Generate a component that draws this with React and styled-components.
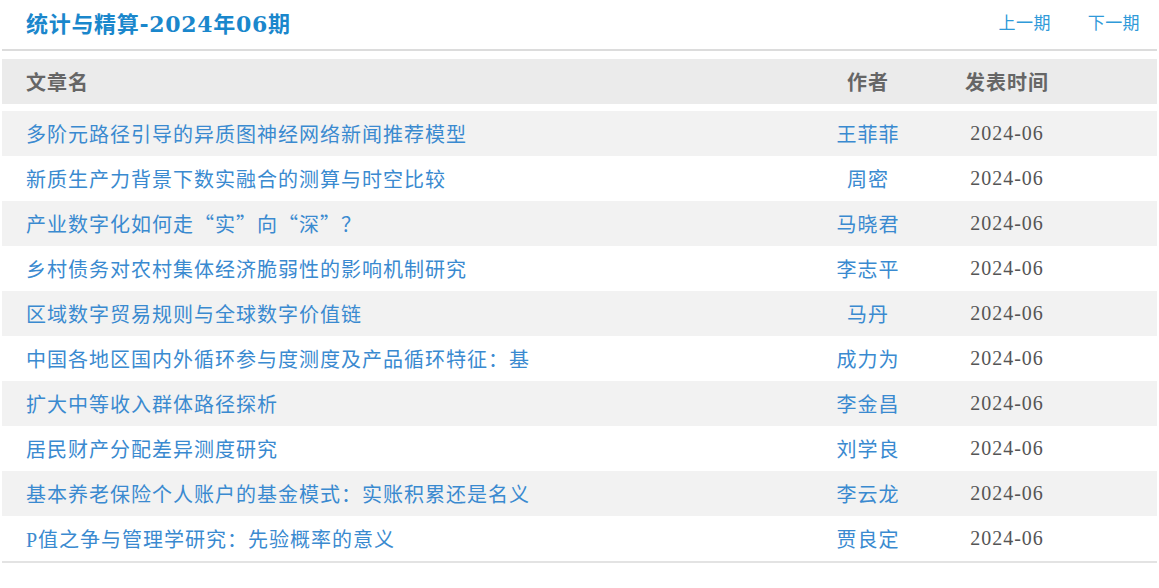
import styled, { createGlobalStyle } from "styled-components";

const GlobalStyle = createGlobalStyle`
  body {
    margin: 0;
    background: #fff;
    font-family: "Liberation Serif", "Noto Sans CJK SC", serif;
  }
`;

const Page = styled.div`
  width: 1155px;
  margin: 0 2px;
`;

const TopBar = styled.div`
  display: flex;
  align-items: center;
  justify-content: space-between;
  box-sizing: border-box;
  height: 51px;
  padding: 0 17px 6px 24px;
  border-bottom: 2px solid #dcdcdc;
`;

const Title = styled.h1`
  margin: 0;
  font-family: "DejaVu Serif", "Noto Sans CJK SC", serif;
  font-size: 22px;
  font-weight: bold;
  color: #1a87cc;
  letter-spacing: 0.7px;
`;

const Nav = styled.div`
  display: flex;
  gap: 37px;
`;

const NavLink = styled.a`
  font-size: 17px;
  letter-spacing: 0.4px;
  color: #2f9ad9;
  text-decoration: none;
  cursor: pointer;
`;

const Table = styled.div`
  margin-top: 8px;
  border-bottom: 2px solid #e3e3e3;
`;

const Row = styled.div`
  display: grid;
  grid-template-columns: 1fr 130px 148px 76px;
  align-items: center;
  height: 45px;
  padding-left: 24px;
  background: ${(p) => (p.$shaded ? "#f2f2f2" : "#fff")};
  font-size: 20px;
  letter-spacing: 1px;
`;

const HeadRow = styled(Row)`
  background: #ebebeb;
  margin-bottom: 7px;
  color: #666;
  font-weight: bold;
`;

const Cell = styled.div`
  text-align: ${(p) => (p.$center ? "center" : "left")};
  white-space: nowrap;
  overflow: hidden;
`;

const ArticleLink = styled.a`
  color: #3a8ad0;
  text-decoration: none;
  cursor: pointer;
`;

// curly quotes render full width in the original CJK font
const Quote = styled.span`
  font-family: "Noto Sans CJK SC", sans-serif;
`;

const DateText = styled.span`
  color: #555;
`;

const articles = [
  ["多阶元路径引导的异质图神经网络新闻推荐模型", "王菲菲"],
  ["新质生产力背景下数实融合的测算与时空比较", "周密"],
  ["产业数字化如何走“实”向“深”？", "马晓君"],
  ["乡村债务对农村集体经济脆弱性的影响机制研究", "李志平"],
  ["区域数字贸易规则与全球数字价值链", "马丹"],
  ["中国各地区国内外循环参与度测度及产品循环特征：基", "成力为"],
  ["扩大中等收入群体路径探析", "李金昌"],
  ["居民财产分配差异测度研究", "刘学良"],
  ["基本养老保险个人账户的基金模式：实账积累还是名义", "李云龙"],
  ["P值之争与管理学研究：先验概率的意义", "贾良定"],
];

const withQuotes = (text) =>
  text.split(/([“”])/).map((part, i) =>
    part === "“" || part === "”" ? <Quote key={i}>{part}</Quote> : part
  );

export default function App() {
  return (
    <Page>
      <GlobalStyle />
      <TopBar>
        <Title>统计与精算-2024年06期</Title>
        <Nav>
          <NavLink>上一期</NavLink>
          <NavLink>下一期</NavLink>
        </Nav>
      </TopBar>
      <Table>
        <HeadRow>
          <Cell>文章名</Cell>
          <Cell $center>作者</Cell>
          <Cell $center>发表时间</Cell>
          <Cell />
        </HeadRow>
        {articles.map(([title, author], i) => (
          <Row key={title} $shaded={i % 2 === 0}>
            <Cell>
              <ArticleLink>{withQuotes(title)}</ArticleLink>
            </Cell>
            <Cell $center>
              <ArticleLink>{author}</ArticleLink>
            </Cell>
            <Cell $center>
              <DateText>2024-06</DateText>
            </Cell>
            <Cell />
          </Row>
        ))}
      </Table>
    </Page>
  );
}
